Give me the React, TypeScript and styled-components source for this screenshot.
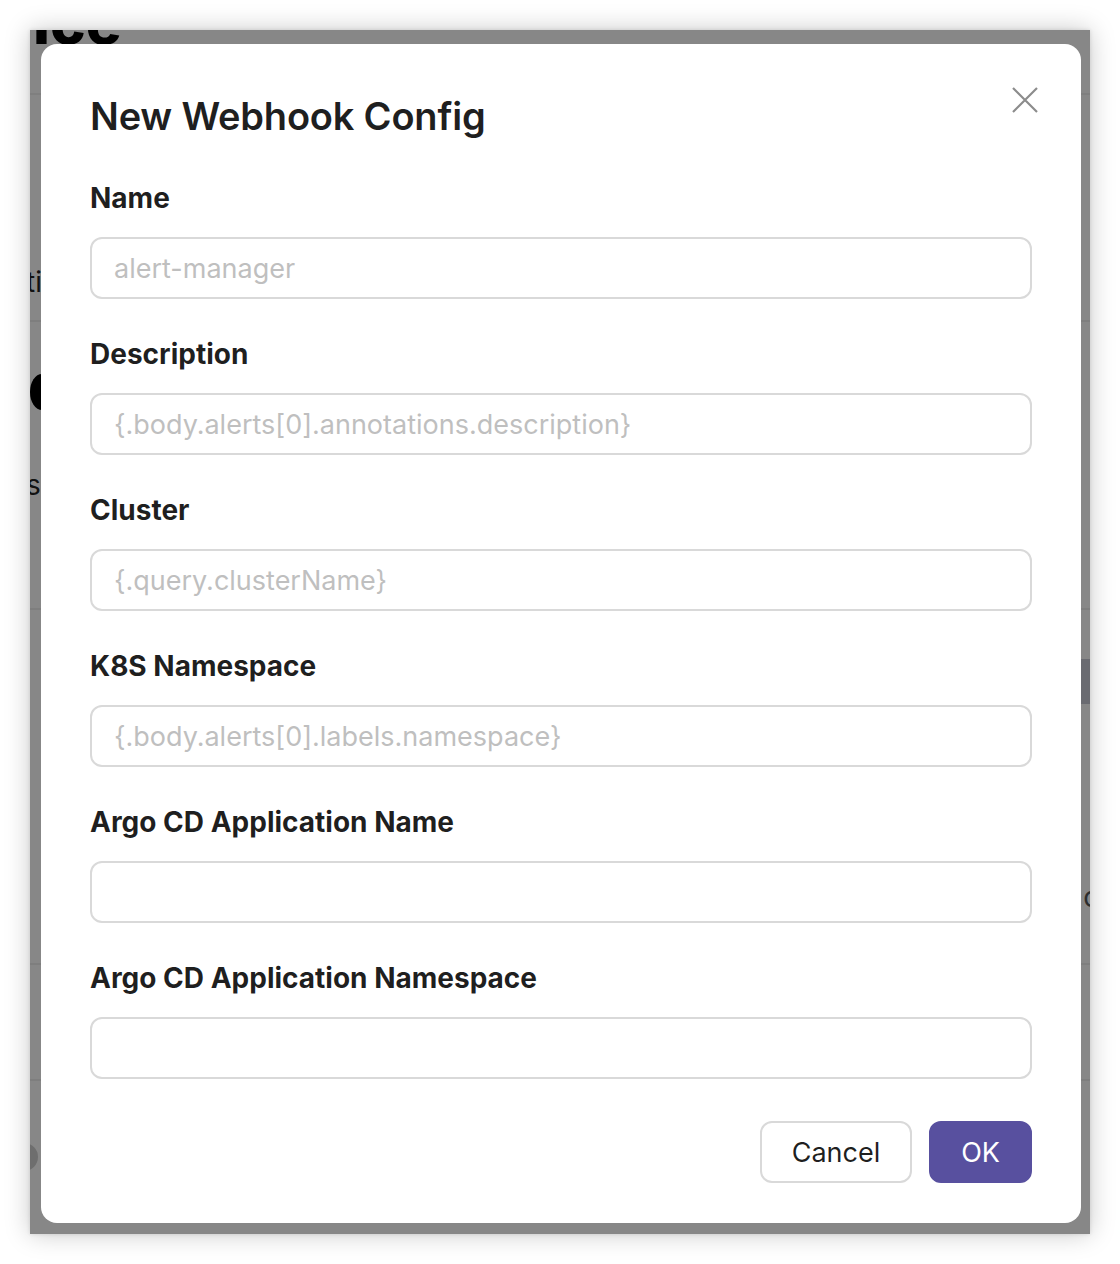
import styled, { createGlobalStyle } from "styled-components"

const GlobalStyle = createGlobalStyle`
  html, body {
    margin: 0;
    padding: 0;
    background: #ffffff;
    font-family: Inter, "Noto Sans", "Liberation Sans", sans-serif;
  }
  * {
    box-sizing: border-box;
  }
`

interface Field {
  label: string
  placeholder?: string
}

const fields: Field[] = [
  { label: "Name", placeholder: "alert-manager" },
  { label: "Description", placeholder: "{.body.alerts[0].annotations.description}" },
  { label: "Cluster", placeholder: "{.query.clusterName}" },
  { label: "K8S Namespace", placeholder: "{.body.alerts[0].labels.namespace}" },
  { label: "Argo CD Application Name" },
  { label: "Argo CD Application Namespace" },
]

export default function App() {
  return <Page>
    <GlobalStyle />
    <Window>
      {/* the page behind the dialog, only its edges show */}
      <Backdrop>
        <BackHeader>
          <BackTitle>ice</BackTitle>
        </BackHeader>
        <BackSection $height={227}>
          <BackText $top={170}>ti</BackText>
        </BackSection>
        <BackSection $height={288}>
          <BackDot $top={52} />
          <BackText $top={146}>s</BackText>
        </BackSection>
        <BackSection $height={355}>
          <BackBar $top={49} />
          <BackTextRight $top={270}>o</BackTextRight>
        </BackSection>
        <BackSection $height={116} />
        <BackSection $height={160}>
          <BackAvatar $top={62} />
        </BackSection>
      </Backdrop>
      <Overlay />

      <Modal>
        <CloseButton aria-label="Close">
          <svg width="26" height="26" viewBox="0 0 26 26" fill="none">
            <path d="M1 1L25 25M25 1L1 25" stroke="#8c8c8c" strokeWidth="2.2" />
          </svg>
        </CloseButton>
        <Title>New Webhook Config</Title>
        <Form>
          {fields.map(f => (
            <FormItem key={f.label}>
              <Label>{f.label}</Label>
              <Input placeholder={f.placeholder} />
            </FormItem>
          ))}
        </Form>
        <Footer>
          <Button>Cancel</Button>
          <Button $primary>OK</Button>
        </Footer>
      </Modal>
    </Window>
  </Page>
}

const Page = styled.div`
  width: 1120px;
  height: 1264px;
  padding: 30px;
  background: #ffffff;
`

const Window = styled.div`
  position: relative;
  width: 1060px;
  height: 1204px;
  overflow: hidden;
  background: #ffffff;
  box-shadow: 0 0 24px rgba(0, 0, 0, 0.22), 0 0 4px rgba(0, 0, 0, 0.12);
`

const Backdrop = styled.div`
  display: flex;
  flex-direction: column;
`

const BackHeader = styled.div`
  height: 65px;
  overflow: hidden;
  padding-left: 3px;
  border-bottom: 2px solid #f0f0f0;
`

const BackTitle = styled.span`
  display: block;
  margin-top: -38px;
  font-size: 60px;
  line-height: 60px;
  font-weight: 800;
  color: #000;
`

const BackSection = styled.div<{ $height: number }>`
  position: relative;
  height: ${p => p.$height}px;
  border-bottom: 2px solid #eeeeee;
`

const BackText = styled.span<{ $top: number }>`
  position: absolute;
  top: ${p => p.$top}px;
  left: -4px;
  font-size: 28px;
  color: #222;
`

const BackTextRight = styled(BackText)`
  left: auto;
  right: -10px;
  color: #555;
`

const BackDot = styled.span<{ $top: number }>`
  position: absolute;
  top: ${p => p.$top}px;
  left: 0;
  width: 24px;
  height: 36px;
  border-radius: 50%;
  background: #000;
`

const BackBar = styled.span<{ $top: number }>`
  position: absolute;
  top: ${p => p.$top}px;
  right: 0;
  width: 80px;
  height: 45px;
  background: #c8cbd6;
`

const BackAvatar = styled.span<{ $top: number }>`
  position: absolute;
  top: ${p => p.$top}px;
  left: -20px;
  width: 28px;
  height: 28px;
  border-radius: 50%;
  background: #d0d0d0;
`

const Overlay = styled.div`
  position: absolute;
  inset: 0;
  background: rgba(0, 0, 0, 0.47);
`

const Modal = styled.div`
  position: absolute;
  left: 11px;
  top: 14px;
  width: 1040px;
  height: 1179px;
  padding: 44px 49px 40px;
  background: #ffffff;
  border-radius: 16px;
  display: flex;
  flex-direction: column;
`

const CloseButton = styled.button`
  position: absolute;
  top: 43px;
  right: 43px;
  width: 26px;
  height: 26px;
  padding: 0;
  border: none;
  background: transparent;
  display: flex;
  align-items: center;
  justify-content: center;
`

const Title = styled.h2`
  margin: 0 0 31px;
  font-size: 38px;
  line-height: 56px;
  font-weight: 600;
  color: rgba(0, 0, 0, 0.88);
  letter-spacing: -0.2px;
`

const Form = styled.div`
  display: flex;
  flex-direction: column;
  gap: 32px;
`

const FormItem = styled.div`
  display: flex;
  flex-direction: column;
`

const Label = styled.label`
  height: 46px;
  line-height: 46px;
  margin-bottom: 16px;
  font-size: 28px;
  font-weight: 700;
  color: rgba(0, 0, 0, 0.88);
`

const Input = styled.input`
  height: 62px;
  width: 100%;
  padding: 0 22px;
  border: 2px solid #d9d9d9;
  border-radius: 12px;
  font-family: inherit;
  font-size: 27px;
  color: rgba(0, 0, 0, 0.88);
  background: #ffffff;
  outline: none;

  &::placeholder {
    color: #bfbfbf;
  }
`

const Footer = styled.div`
  display: flex;
  justify-content: flex-end;
  gap: 17px;
  margin-top: 42px;
`

const Button = styled.button<{ $primary?: boolean }>`
  height: 62px;
  padding: 0 30px;
  border-radius: 12px;
  font-family: inherit;
  font-size: 27px;
  border: 2px solid ${p => p.$primary ? "#58509f" : "#d9d9d9"};
  background: ${p => p.$primary ? "#58509f" : "#ffffff"};
  color: ${p => p.$primary ? "#ffffff" : "rgba(0, 0, 0, 0.88)"};
`
